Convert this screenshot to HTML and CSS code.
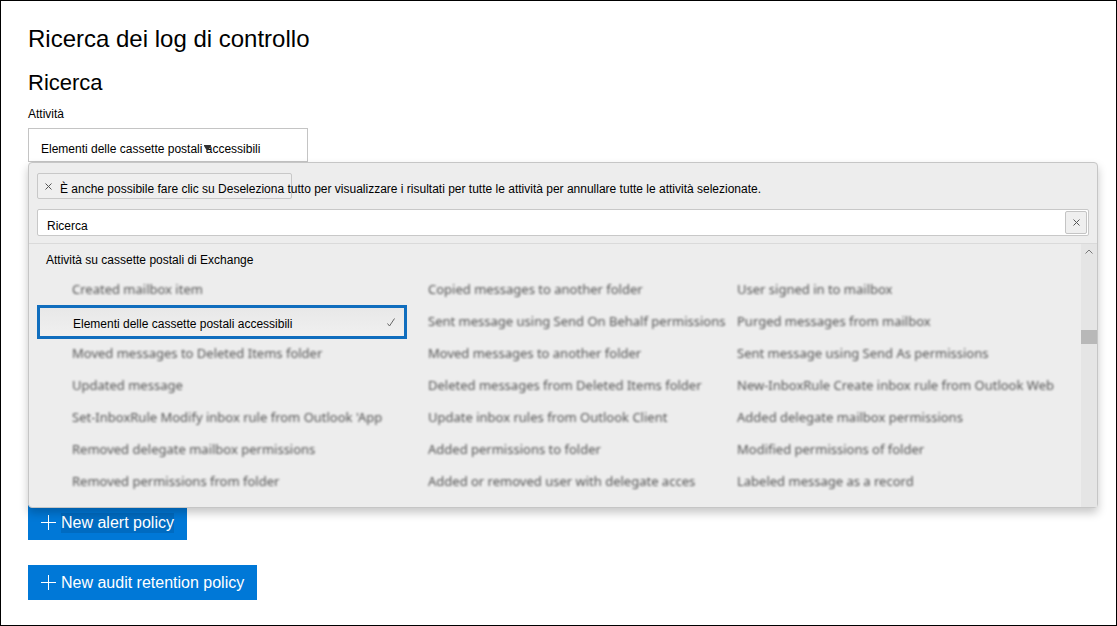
FILE: index.html
```html
<!DOCTYPE html>
<html lang="it">
<head>
<meta charset="utf-8">
<meta name="viewport" content="width=device-width, initial-scale=1">
<title>Ricerca dei log di controllo</title>
<link rel="stylesheet" href="styles.css">
</head>
<body>
<main class="page">
  <h1 class="title">Ricerca dei log di controllo</h1>
  <h2 class="subtitle">Ricerca</h2>
  <label class="field-label" for="activity">Attività</label>
  <div class="picker">
    <select class="picker-select" id="activity">
      <option>Elementi delle cassette postali accessibili</option>
    </select>
    <svg class="picker-caret" viewBox="0 0 7 5" aria-hidden="true"><path d="M0 0h7v1L4.500 5h-2L0 1z"/></svg>
  </div>

  <section class="panel">
    <div class="panel-head">
      <button class="clear-all" type="button">
        <svg class="cross" viewBox="0 0 7 7" aria-hidden="true"><path d="M.5.5l6 6M6.500.5l-6 6"/></svg>
        <span class="clear-text">È anche possibile fare clic su Deseleziona tutto per visualizzare i risultati per tutte le attività per annullare tutte le attività selezionate.</span>
      </button>
      <div class="search">
        <input class="search-input" type="text" value="Ricerca" aria-label="Ricerca">
        <button class="search-clear" type="button" aria-label="Cancella">
          <svg class="cross" viewBox="0 0 7 7" aria-hidden="true"><path d="M.5.5l6 6M6.500.5l-6 6"/></svg>
        </button>
      </div>
    </div>
    <div class="results">
      <div class="results-body">
        <h3 class="group">Attività su cassette postali di Exchange</h3>
        <ul class="options" role="listbox" aria-label="Attività su cassette postali di Exchange">
          <li class="option first" role="option"><span class="soft">Created mailbox item</span></li>
          <li class="option" role="option"><span class="soft">Copied messages to another folder</span></li>
          <li class="option" role="option"><span class="soft">User signed in to mailbox</span></li>
          <li class="option first selected" role="option" aria-selected="true">
            <span class="selected-text">Elementi delle cassette postali accessibili</span>
            <svg class="check" viewBox="0 0 8 9" aria-hidden="true"><path d="M.5 5.500l2 2.500L7.500.5"/></svg>
          </li>
          <li class="option" role="option"><span class="soft">Sent message using Send On Behalf permissions</span></li>
          <li class="option" role="option"><span class="soft">Purged messages from mailbox</span></li>
          <li class="option first" role="option"><span class="soft">Moved messages to Deleted Items folder</span></li>
          <li class="option" role="option"><span class="soft">Moved messages to another folder</span></li>
          <li class="option" role="option"><span class="soft">Sent message using Send As permissions</span></li>
          <li class="option first" role="option"><span class="soft">Updated message</span></li>
          <li class="option" role="option"><span class="soft">Deleted messages from Deleted Items folder</span></li>
          <li class="option" role="option"><span class="soft">New-InboxRule Create inbox rule from Outlook Web</span></li>
          <li class="option first" role="option"><span class="soft">Set-InboxRule Modify inbox rule from Outlook 'App</span></li>
          <li class="option" role="option"><span class="soft">Update inbox rules from Outlook Client</span></li>
          <li class="option" role="option"><span class="soft">Added delegate mailbox permissions</span></li>
          <li class="option first" role="option"><span class="soft">Removed delegate mailbox permissions</span></li>
          <li class="option" role="option"><span class="soft">Added permissions to folder</span></li>
          <li class="option" role="option"><span class="soft">Modified permissions of folder</span></li>
          <li class="option first" role="option"><span class="soft">Removed permissions from folder</span></li>
          <li class="option" role="option"><span class="soft">Added or removed user with delegate acces</span></li>
          <li class="option" role="option"><span class="soft">Labeled message as a record</span></li>
        </ul>
      </div>
      <div class="scrollbar" aria-hidden="true">
        <svg class="scroll-up" viewBox="0 0 8 5"><path d="M.5 4.500L4 1l3.500 3.500"/></svg>
        <div class="thumb"></div>
      </div>
    </div>
  </section>

  <div class="actions">
    <button class="action" type="button">
      <svg class="plus" viewBox="0 0 15 15" aria-hidden="true"><path d="M7.500 0v15M0 7.500h15"/></svg>
      <span class="highlight">New alert policy</span>
    </button>
    <button class="action" type="button">
      <svg class="plus" viewBox="0 0 15 15" aria-hidden="true"><path d="M7.500 0v15M0 7.500h15"/></svg>
      <span>New audit retention policy</span>
    </button>
  </div>
</main>
</body>
</html>
```
FILE: styles.css
```css
* {
  box-sizing: border-box;
}

body {
  margin: 0;
  background: #fff;
  color: #000;
  font: 12px/16px "Liberation Sans", Arial, sans-serif;
}

button,
input,
select {
  margin: 0;
  border-radius: 0;
  color: inherit;
  font: inherit;
}

svg {
  flex: none;
  fill: none;
}

.page {
  min-height: 100vh;
  padding: 22px 18px 25px 27px;
  border: 1px solid #000;
}

.title {
  margin: 0 0 13px;
  font-size: 24px;
  font-weight: 400;
  line-height: 32px;
}

.subtitle {
  margin: 0 0 8px;
  font-size: 22px;
  font-weight: 400;
  line-height: 30px;
}

.field-label {
  display: block;
  margin-bottom: 6px;
}

.picker {
  position: relative;
  width: 280px;
}

.picker-select {
  display: block;
  width: 100%;
  height: 34px;
  padding: 8px 12px 0;
  border: 1px solid #c4c4c4;
  background: #fff;
  appearance: none;
}

.picker-caret {
  position: absolute;
  top: 17px;
  left: 176px;
  width: 7px;
  height: 5px;
  fill: #333;
}

.panel {
  position: relative;
  z-index: 1;
  border: 1px solid #c6c6c6;
  border-radius: 4px;
  background: #ededed;
  box-shadow: 0 5px 10px rgba(0, 0, 0, 0.22);
}

.panel-head {
  padding: 10px 8px 7px;
  border-bottom: 1px solid #dadada;
}

.clear-all {
  display: flex;
  align-items: center;
  gap: 8px;
  width: 255px;
  height: 26px;
  padding: 0 7px;
  border: 1px solid #c8c8c8;
  border-radius: 2px;
  background: #efefef;
  white-space: nowrap;
}

.clear-text {
  padding-top: 6px;
}

.cross {
  width: 7px;
  height: 7px;
  stroke: #555;
}

.search {
  display: flex;
  align-items: center;
  height: 27px;
  margin-top: 10px;
  padding: 1px;
  border: 1px solid #c8c8c8;
  border-radius: 2px;
  background: #fff;
}

.search-input {
  flex: 1;
  min-width: 0;
  height: 23px;
  padding: 6px 8px 0;
  border: 0;
  background: transparent;
  font-size: 12px;
  outline: 0;
}

.search-clear {
  display: flex;
  align-items: center;
  justify-content: center;
  width: 22px;
  height: 23px;
  padding: 0;
  border: 1px solid #c4c4c4;
  border-radius: 2px;
  background: #efefef;
}

.results {
  display: flex;
}

.results-body {
  flex: 1;
  min-width: 0;
  padding: 8px 0 9px 8px;
}

.group {
  margin: 0 0 6px;
  padding-left: 9px;
  font-size: 12px;
  font-weight: 400;
}

.options {
  display: grid;
  grid-template-columns: 370fr 288fr 344fr;
  column-gap: 21px;
  grid-auto-rows: 32px;
  margin: 0;
  padding: 0;
  list-style: none;
}

.option {
  display: flex;
  align-items: center;
  min-width: 0;
  font-family: "Noto Sans", "Open Sans", sans-serif;
  font-size: 13px;
  white-space: nowrap;
}

.first {
  padding-left: 35px;
}

.soft {
  padding-bottom: 2px;
  color: #555;
  filter: blur(1px);
}

.selected {
  justify-content: space-between;
  margin: -1px 0;
  padding: 0 9px 0 33px;
  border: 3px solid #106ebe;
  background: linear-gradient(#e8e8e8, #f0f0f0);
  font-family: "Liberation Sans", Arial, sans-serif;
  font-size: 12px;
}

.selected-text {
  padding-top: 4px;
}

.check {
  width: 8px;
  height: 9px;
  stroke: #666;
}

.scrollbar {
  display: flex;
  flex-direction: column;
  align-items: center;
  width: 16px;
  padding-top: 5px;
  background: #e5e5e5;
}

.scroll-up {
  width: 8px;
  height: 5px;
  stroke: #777;
}

.thumb {
  width: 16px;
  height: 14px;
  margin-top: 76px;
  background: #b8b8b8;
}

.actions {
  display: flex;
  flex-direction: column;
  align-items: flex-start;
  gap: 25px;
  margin-top: -3px;
}

.action {
  display: flex;
  align-items: center;
  gap: 5px;
  height: 35px;
  padding: 0 13px;
  border: 0;
  background: #0078d7;
  color: #fff;
  font-size: 16px;
  line-height: 20px;
}

.highlight {
  background: #006bc1;
}

.plus {
  width: 15px;
  height: 15px;
  stroke: #fff;
}
```
